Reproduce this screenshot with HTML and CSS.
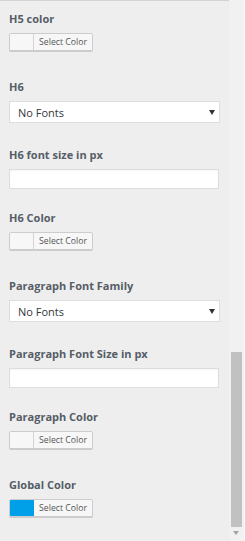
FILE: index.html
```html
<!DOCTYPE html>
<html>
<head>
<meta charset="utf-8">
<link rel="stylesheet" href="styles.css">
</head>
<body>
<div class="frame">
  <div class="panel">
    <div class="field field-color">
      <span class="label">H5 color</span>
      <button class="color-btn"><span class="swatch"></span><span class="btn-text">Select Color</span></button>
    </div>
    <div class="field field-select">
      <span class="label">H6</span>
      <div class="select"><span>No Fonts</span><svg class="caret" width="6" height="5" viewBox="0 0 6 5"><path d="M0 0H6L3 5Z" fill="#333"/></svg></div>
    </div>
    <div class="field field-input">
      <span class="label">H6 font size in px</span>
      <input class="text-input" type="text">
    </div>
    <div class="field field-color">
      <span class="label">H6 Color</span>
      <button class="color-btn"><span class="swatch"></span><span class="btn-text">Select Color</span></button>
    </div>
    <div class="field field-select">
      <span class="label">Paragraph Font Family</span>
      <div class="select"><span>No Fonts</span><svg class="caret" width="6" height="5" viewBox="0 0 6 5"><path d="M0 0H6L3 5Z" fill="#333"/></svg></div>
    </div>
    <div class="field field-input">
      <span class="label">Paragraph Font Size in px</span>
      <input class="text-input" type="text">
    </div>
    <div class="field field-color">
      <span class="label">Paragraph Color</span>
      <button class="color-btn"><span class="swatch"></span><span class="btn-text">Select Color</span></button>
    </div>
    <div class="field field-color">
      <span class="label">Global Color</span>
      <button class="color-btn"><span class="swatch swatch-blue"></span><span class="btn-text">Select Color</span></button>
    </div>
  </div>
  <div class="scrollbar">
    <div class="thumb"></div>
    <svg class="arrow" width="6" height="4" viewBox="0 0 6 4"><path d="M0 0H6L3 4Z" fill="#a3a3a3"/></svg>
  </div>
</div>
</body>
</html>
```

FILE: styles.css
```css
html, body {
  margin: 0;
  padding: 0;
  background: #eeeeee;
}

.frame {
  display: flex;
  width: 245px;
  height: 541px;
  overflow: hidden;
  font-family: "Open Sans", "Liberation Sans", sans-serif;
}

.panel {
  width: 229px;
  height: 541px;
  box-sizing: border-box;
  background: #eeeeee;
  border-top: 1px solid #d2d2d2;
  padding: 11px 0 0 9px;
  display: flex;
  flex-direction: column;
}

.field {
  display: flex;
  flex-direction: column;
  align-items: flex-start;
}

.field-color { margin-bottom: 29px; }
.field-select { margin-bottom: 25px; }
.field-input { margin-bottom: 22px; }

.label {
  font-size: 11px;
  line-height: 14px;
  font-weight: 700;
  color: #555d66;
  margin-bottom: 7px;
}

.color-btn {
  display: flex;
  align-items: stretch;
  width: 84px;
  height: 18px;
  padding: 0;
  margin: 0;
  box-sizing: border-box;
  border: 1px solid #cccccc;
  border-radius: 2px;
  background: #f7f7f7;
  box-shadow: 0 1px 0 #cccccc;
  overflow: hidden;
  font-family: inherit;
}

.swatch {
  width: 23px;
  background: #f7f7f7;
  border-right: 1px solid #d4d4d4;
}

.swatch-blue {
  background: #00a0e9;
  border-right-color: #00a0e9;
}

.btn-text {
  flex: 1;
  font-size: 8.7px;
  line-height: 16px;
  color: #555555;
  text-align: center;
  background: #f7f7f7;
}

.select {
  width: 211px;
  height: 22px;
  box-sizing: border-box;
  border: 1px solid #dddddd;
  background: #ffffff;
  display: flex;
  align-items: center;
  justify-content: space-between;
  padding: 0 4px 0 8px;
  font-size: 11px;
  color: #32373c;
}

.caret {
  display: block;
}

.text-input {
  width: 210px;
  height: 20px;
  box-sizing: border-box;
  border: 1px solid #dddddd;
  background: #ffffff;
  margin: 0;
  padding: 0 4px;
  box-shadow: inset 0 1px 2px rgba(0, 0, 0, 0.04);
  font-family: inherit;
  font-size: 11px;
}

.scrollbar {
  width: 16px;
  height: 541px;
  box-sizing: border-box;
  background: #f1f1f1;
  border-right: 1px solid #fafafa;
  padding: 352px 0 0 2px;
  display: flex;
  flex-direction: column;
  align-items: flex-start;
}

.thumb {
  width: 11px;
  height: 175px;
  background: #c1c1c1;
}

.arrow {
  display: block;
  margin: 4px 0 0 2px;
}
```
